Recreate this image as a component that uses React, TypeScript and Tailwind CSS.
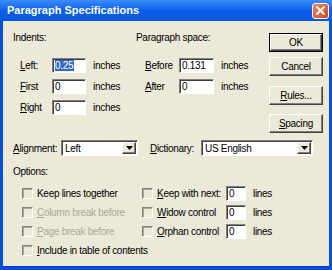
import React from 'react';

const sunken =
  'border border-t-[#808080] border-l-[#808080] border-b-white border-r-white shadow-[inset_1px_1px_0_#404040]';
const raised =
  'border border-t-white border-l-white border-b-[#404040] border-r-[#404040] shadow-[inset_-1px_-1px_0_#808080]';

function U({ children }: { children: React.ReactNode }) {
  return <span className="underline underline-offset-[1px]">{children}</span>;
}

function Field({ value, width, selected }: { value: string; width: number; selected?: boolean }) {
  return (
    <div className={`h-[15px] bg-white ${sunken} flex items-center pl-[2px] leading-[11px]`} style={{ width }}>
      {selected ? <span className="bg-[#316ac5] text-white pr-[1px]">{value}</span> : <span>{value}</span>}
    </div>
  );
}

function Dropdown({ value, width }: { value: string; width: number }) {
  return (
    <div className={`h-[16px] bg-white ${sunken} flex items-center`} style={{ width }}>
      <span className="flex-1 pl-[3px]">{value}</span>
      <div className={`w-[14px] h-[12px] mr-[1px] bg-[#ece9d8] ${raised} flex items-center justify-center`}>
        <svg width="7" height="4" viewBox="0 0 7 4">
          <path d="M0 0h7L3.5 4z" fill="#000" />
        </svg>
      </div>
    </div>
  );
}

function Btn({ label, def }: { label: React.ReactNode; def?: boolean }) {
  const inner = (
    <div className={`h-full w-full ${raised} flex items-center justify-center`}>{label}</div>
  );
  return def ? (
    <div className="w-[54px] h-[19px] border border-black">{inner}</div>
  ) : (
    <div className="w-[54px] h-[19px]">{inner}</div>
  );
}

function Box() {
  return <div className={`w-[11px] h-[11px] shrink-0 ${sunken} shadow-[inset_1px_1px_0_#aca899]`} />;
}

function Check({ label, disabled }: { label: React.ReactNode; disabled?: boolean }) {
  return (
    <div className="flex items-center h-[19px] whitespace-nowrap">
      <Box />
      <span className={`ml-[4px] ${disabled ? 'text-[#aca899]' : ''}`}>{label}</span>
    </div>
  );
}

function LineCheck({ label, value }: { label: React.ReactNode; value: string }) {
  return (
    <div className="flex items-center h-[19px] whitespace-nowrap">
      <Box />
      <span className="ml-[4px] w-[69px]">{label}</span>
      <Field value={value} width={20} />
      <span className="ml-[7px]">lines</span>
    </div>
  );
}

export default function App() {
  return (
    <div className="w-[332px] h-[270px] flex flex-col bg-[#0a4fd6] font-['Liberation_Sans',Arial,sans-serif] text-[10px] tracking-[-0.3px] text-black overflow-hidden">
      {/* title bar */}
      <div className="h-[21px] shrink-0 flex items-center bg-gradient-to-b from-[#3a8cf7] via-[#0a5fea] to-[#0656e0] pl-[7px] pr-[3px]">
        <span className="flex-1 text-white font-bold text-[11px] tracking-normal">Paragraph Specifications</span>
        <div className="w-[17px] h-[16px] rounded-[3px] border border-white bg-gradient-to-br from-[#e98563] to-[#d2461f] flex items-center justify-center">
          <svg width="9" height="9" viewBox="0 0 9 9">
            <path d="M1 1l7 7M8 1L1 8" stroke="#fff" strokeWidth="2" strokeLinecap="square" />
          </svg>
        </div>
      </div>

      {/* body */}
      <div className="flex-1 mx-[3px] mb-[3px] bg-[#ece9d8] pl-[10px] pt-[9px] flex flex-col border-b border-[#0831d9] whitespace-nowrap">
        <div className="flex">
          <div className="w-[256px]">
            <div className="flex h-[14px] items-center">
              <span className="w-[123px]">Indents:</span>
              <span>Paragraph space:</span>
            </div>
            <div className="mt-[14px] flex flex-col gap-[6px]">
              {[
                { l: 'L', lr: 'eft:', v: '0.25', r: 'B', rr: 'efore', rv: '0.131' },
                { l: 'F', lr: 'irst', v: '0', r: 'A', rr: 'fter', rv: '0' },
                { l: 'R', lr: 'ight', v: '0' },
              ].map((row, i) => (
                <div key={i} className="flex items-center h-[15px]">
                  <span className="ml-[7px] w-[32px]">
                    <U>{row.l}</U>
                    {row.lr}
                  </span>
                  <Field value={row.v} width={34} selected={i === 0} />
                  <span className="ml-[7px] w-[43px]">inches</span>
                  {row.r && (
                    <>
                      <span className="ml-[9px] w-[34px]">
                        <U>{row.r}</U>
                        {row.rr}
                      </span>
                      <Field value={row.rv!} width={35} />
                      <span className="ml-[7px]">inches</span>
                    </>
                  )}
                </div>
              ))}
            </div>
          </div>
          <div className="flex flex-col mt-[3px]">
            <Btn label="OK" def />
            <div className="mt-[5px]">
              <Btn label="Cancel" />
            </div>
            <div className="mt-[10px]">
              <Btn
                label={
                  <span>
                    <U>R</U>ules...
                  </span>
                }
              />
            </div>
            <div className="mt-[9px]">
              <Btn
                label={
                  <span>
                    <U>S</U>pacing
                  </span>
                }
              />
            </div>
          </div>
        </div>

        <div className="flex items-center mt-[7px] h-[16px]">
          <span className="w-[48px]">
            <U>A</U>lignment:
          </span>
          <Dropdown value="Left" width={77} />
          <span className="ml-[12px] w-[51px]">
            <U>D</U>ictionary:
          </span>
          <Dropdown value="US English" width={112} />
        </div>

        <div className="mt-[10px] h-[12px] leading-[12px]">Options:</div>

        <div className="mt-[6px] flex">
          <div className="ml-[9px] w-[120px] flex flex-col">
            <Check label="Keep lines together" />
            <Check
              disabled
              label={
                <>
                  <U>C</U>olumn break before
                </>
              }
            />
            <Check
              disabled
              label={
                <>
                  <U>P</U>age break before
                </>
              }
            />
            <Check
              label={
                <>
                  <U>I</U>nclude in table of contents
                </>
              }
            />
          </div>
          <div className="flex flex-col">
            <LineCheck
              label={
                <>
                  <U>K</U>eep with next:
                </>
              }
              value="0"
            />
            <LineCheck
              label={
                <>
                  <U>W</U>idow control
                </>
              }
              value="0"
            />
            <LineCheck
              label={
                <>
                  <U>O</U>rphan control
                </>
              }
              value="0"
            />
          </div>
        </div>
      </div>
    </div>
  );
}
